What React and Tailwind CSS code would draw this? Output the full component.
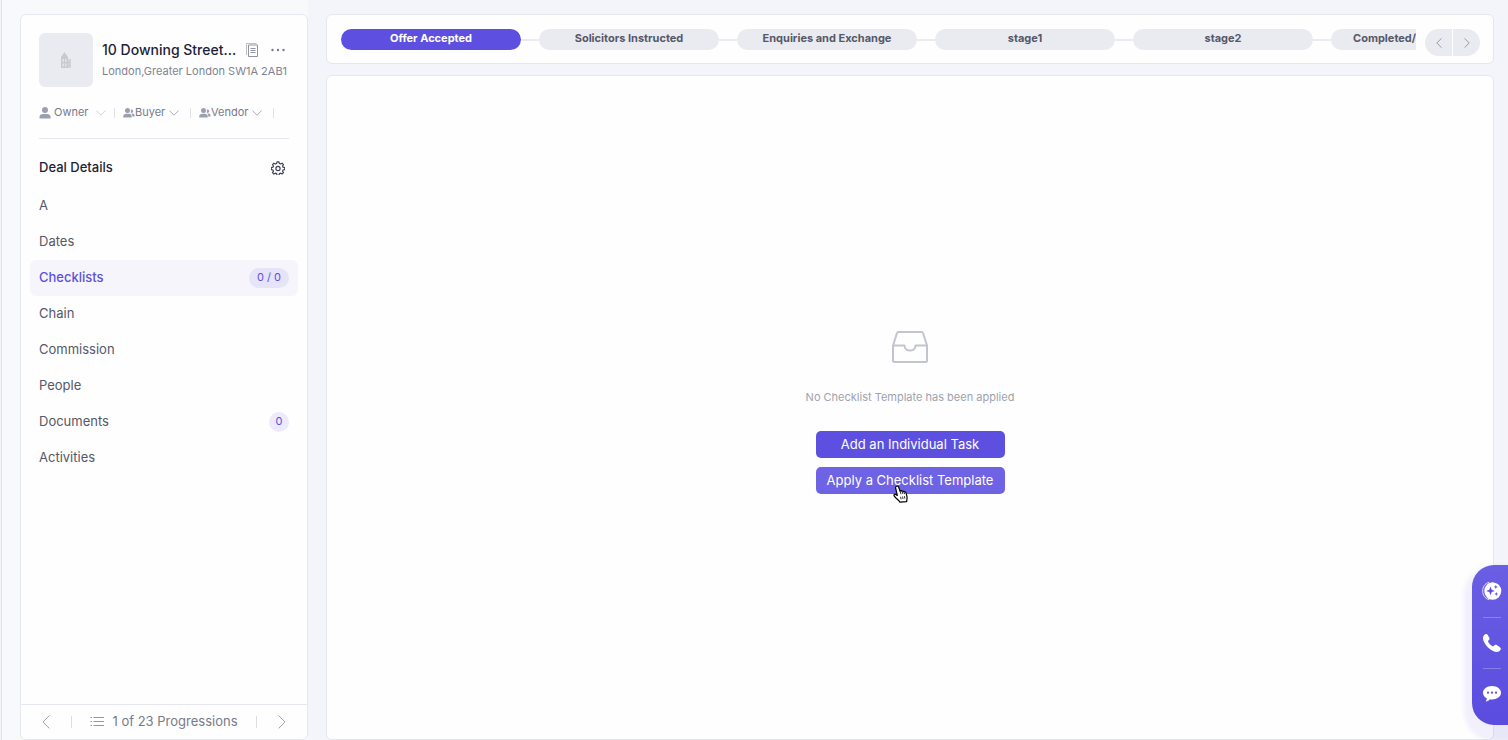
import { Fragment } from "react";

const stages = [
  "Offer Accepted",
  "Solicitors Instructed",
  "Enquiries and Exchange",
  "stage1",
  "stage2",
];

const menu = [
  { label: "A" },
  { label: "Dates" },
  { label: "Checklists", badge: "0 / 0", active: true },
  { label: "Chain" },
  { label: "Commission" },
  { label: "People" },
  { label: "Documents", badge: "0" },
  { label: "Activities" },
];

function Chevron({ d, className }) {
  return (
    <svg viewBox="0 0 16 16" fill="none" stroke="currentColor" strokeLinecap="round" strokeLinejoin="round" className={className}>
      <path d={d} />
    </svg>
  );
}

const LEFT = "M11.5 1 4.5 8l7 7";
const RIGHT = "M4.5 1l7 7-7 7";
const DOWN = "M1 4.500 8 11.500 15 4.500";

function HouseIcon() {
  return (
    <svg viewBox="0 0 12 18" className="h-[18px] w-3">
      <path d="M1 17V6l3.500-5L8 6v11z" fill="#c9cad0" />
      <path d="M8 8.500l3-1V17H8z" fill="#d3d4d9" />
      <path d="M2.500 8h1.500v3H2.500zM5 8h1.500v3H5zM2.500 12.500h1.500v3H2.500zM5 12.500h1.500v3H5z" fill="#e3e4ea" />
      <path d="M9 11h1v1H9zM9 14h1v1H9z" fill="#bdbec5" />
    </svg>
  );
}

function CopyIcon() {
  return (
    <svg viewBox="0 0 13 14" fill="none" stroke="currentColor" className="h-3.5 w-[13px]">
      <path d="M2.500 2v11.500h9V2z" />
      <path d="M.5 12V.5h10" opacity=".6" />
      <path d="M4.500 5.500h5M4.500 7.500h5M4.500 9.500h5" />
    </svg>
  );
}

function PersonIcon() {
  return (
    <svg viewBox="0 0 12 12" fill="currentColor" className="size-3 text-[#9c9fb0]">
      <circle cx="6" cy="3" r="3" />
      <path d="M.5 11.500V10c0-2 1.500-3 3.500-3h4c2 0 3.500 1 3.500 3v1.500z" />
    </svg>
  );
}

function PeopleIcon() {
  return (
    <svg viewBox="0 0 12 12" fill="currentColor" className="size-3 text-[#9c9fb0]">
      <circle cx="4.500" cy="3.500" r="2.500" />
      <path d="M.3 10.500V9.300c0-1.600 1.200-2.600 2.800-2.600h2.800c1.600 0 2.800 1 2.800 2.600v1.200z" />
      <path d="M7.600 5.600a3.400 3.400 0 0 0 .2-3 1.700 1.700 0 1 1-.2 3zM9.400 9.600c0-1.500-.5-2.600-1.400-3.200h1.200c1.300 0 2.400.8 2.400 2.100v1.100z" />
    </svg>
  );
}

function GearIcon() {
  return (
    <svg viewBox="0 0 24 24" fill="none" stroke="currentColor" strokeWidth="2" strokeLinecap="round" strokeLinejoin="round" className="size-3.5">
      <path d="M10.300 1.500h3.400l.7 2.900 2 .9 2.600-1.600 2.400 2.400-1.600 2.600.8 1.900 2.900.7v3.400l-2.900.7-.8 2 1.600 2.500-2.400 2.400-2.600-1.500-2 .8-.7 2.900h-3.400l-.7-2.900-2-.8L5 22.400 2.600 20l1.600-2.600-.8-2-2.900-.7v-3.400l2.900-.7.8-1.900-1.600-2.600L5 3.700l2.600 1.600 2-.9z" />
      <circle cx="12" cy="12.800" r="3.600" />
    </svg>
  );
}

function ListIcon() {
  return (
    <svg viewBox="0 0 14 12" fill="none" stroke="currentColor" className="h-3 w-3.5 text-[#9496a4]">
      <path d="M3.500 1.500H14M3.500 5.500H14M3.500 9.500H14M.5 1.500h1.500M.5 5.500h1.500M.5 9.500h1.500" />
    </svg>
  );
}

function InboxIcon() {
  return (
    <svg viewBox="0 0 36 32" fill="none" stroke="#c3c5ce" strokeWidth="2" strokeLinejoin="round" className="h-8 w-9">
      <path d="M1 14.500 5 2c.2-.7.500-1 1.200-1h23.600c.7 0 1 .3 1.200 1l4 12.500V30a1 1 0 0 1-1 1H2a1 1 0 0 1-1-1z" />
      <path d="M1 14.500h11.500c0 3 2.500 5 5.500 5s5.500-2 5.500-5H35" />
    </svg>
  );
}

function HandCursor() {
  return (
    <svg viewBox="0 0 16 18" className="pointer-events-none absolute top-[18px] left-[77px] h-[18px] w-4">
      <path
        d="M3.600 1.200c1-.4 1.800.2 2.100 1L7 6c.6-.6 1.600-.5 2 .3.700-.5 1.600-.2 1.900.5.700-.4 1.700 0 2 .8.900 2.500 1.600 4.300 1 6.800l-.3 2.200-6.700.6c-.7-1.500-2-2.300-3.200-3.400L1.200 11c-.8-1 .4-2.200 1.500-1.600l1.600 1L2.600 3c-.2-.8.200-1.500 1-1.800z"
        fill="#fff"
        stroke="#000"
        strokeWidth="1.200"
        strokeLinejoin="round"
      />
      <path d="M7 6l1 3.200M9 6.400l.9 2.600M10.900 7l.8 2.200M7.500 11.800l.6 2.500M9.500 11.500l.5 2.500M11.400 11.200l.4 2.400" fill="none" stroke="#000" strokeWidth=".8" />
    </svg>
  );
}

function SparkIcon() {
  return (
    <svg viewBox="0 0 20 20" className="size-5">
      <circle cx="10.500" cy="10" r="8.800" fill="#fff" />
      <path d="M7 1.200a9.300 9.300 0 0 0 0 17.600" fill="none" stroke="#fff" strokeWidth=".8" />
      <path d="M5.500 2.800a9 9 0 0 0 0 14.400" fill="none" stroke="#5d50e0" strokeWidth=".8" />
      <path d="M8.500 5.500l1.200 3.200 3.200 1.200-3.200 1.200-1.200 3.200-1.200-3.200-3.200-1.200 3.200-1.200zM13.800 3.900l.6 1.400 1.400.6-1.400.6-.6 1.400-.6-1.400-1.400-.6 1.400-.6zM14.300 10.900l.6 1.500 1.500.6-1.500.6-.6 1.500-.6-1.500-1.500-.6 1.500-.6z" fill="#5d50e0" />
    </svg>
  );
}

function PhoneIcon() {
  return (
    <svg viewBox="0 0 18 18" fill="#fff" className="size-[18px]">
      <path d="M1.200.9C2.500-.3 4-.2 4.800 1.100l1.500 2.600c.6 1.100.2 2-.9 2.900-.5.400-.4 1 0 1.700.8 1.500 2.100 2.800 3.700 3.700.8.400 1.300.4 1.700-.1.900-1.200 1.800-1.500 2.900-.8l2.900 1.800c1.400.9 1.700 2.200.6 3.400-1.600 1.900-3.800 2.200-6.600 1C6.200 15.300 2.700 11.700.7 7.300-.4 4.800-.3 2.600 1.200.9z" />
    </svg>
  );
}

function ChatIcon() {
  return (
    <svg viewBox="0 0 18 17" className="h-[17px] w-[18px]">
      <path d="M9 1c5 0 9 2.900 9 6.700 0 3.900-4 6.700-9 6.700-.7 0-1.400 0-2-.2-1 1.100-2.300 2-4.400 2.200.8-1 1.200-2 1.100-3.200C1.400 12 0 10 0 7.700 0 3.900 4 1 9 1z" fill="#fff" />
      <circle cx="5" cy="7.700" r="1.100" fill="#5d50e0" />
      <circle cx="9" cy="7.700" r="1.100" fill="#5d50e0" />
      <circle cx="13" cy="7.700" r="1.100" fill="#5d50e0" />
    </svg>
  );
}

function Sidebar() {
  return (
    <aside className="flex w-72 shrink-0 flex-col rounded-md border border-[#e6e7f0] bg-[#fefefe]">
      <div className="px-[18px] pt-[18px]">
        <div className="flex gap-[9px]">
          <div className="flex size-[54px] shrink-0 items-center justify-center rounded-md bg-[#eaebf0]">
            <HouseIcon />
          </div>
          <div className="min-w-0 flex-1 pt-1.5">
            <div className="flex h-[22px] items-center">
              <h1 className="flex-1 text-sm font-medium whitespace-nowrap text-[#1c1f37]">10 Downing Street...</h1>
              <button aria-label="Copy address" className="mr-3 text-[#8f92a1]">
                <CopyIcon />
              </button>
              <button aria-label="More" className="mr-1 text-[#777a8c]">
                <svg viewBox="0 0 14 4" fill="currentColor" className="h-1 w-3.5">
                  <circle cx="1.500" cy="2" r="1.200" />
                  <circle cx="7" cy="2" r="1.200" />
                  <circle cx="12.500" cy="2" r="1.200" />
                </svg>
              </button>
            </div>
            <p className="text-[11px] leading-5 whitespace-nowrap text-[#808393]">London,Greater London SW1A 2AB1</p>
          </div>
        </div>

        <div className="flex h-[52px] items-center border-b border-[#e6e7ee] text-[11px] text-[#777a8b]">
          <button className="flex h-4 w-[75px] items-center">
            <PersonIcon />
            <span className="mr-2 ml-[3px]">Owner</span>
            <Chevron d={DOWN} className="size-2.5 text-[#b4b6c2]" />
          </button>
          <span className="mr-2 h-2.5 w-px bg-[#e0e1ea]" />
          <button className="flex h-4 w-[67px] items-center">
            <PeopleIcon />
            <span className="mr-1">Buyer</span>
            <Chevron d={DOWN} className="size-2.5" />
          </button>
          <span className="mr-2 h-2.5 w-px bg-[#e0e1ea]" />
          <button className="flex h-4 w-[74px] items-center">
            <PeopleIcon />
            <span className="mr-1">Vendor</span>
            <Chevron d={DOWN} className="size-2.5" />
          </button>
          <span className="h-2.5 w-px bg-[#e0e1ea]" />
        </div>

        <div className="flex h-[49px] items-center justify-between pt-2 pr-1">
          <h2 className="text-[13px] font-medium text-[#1c1f37]">Deal Details</h2>
          <button aria-label="Settings" className="text-[#3c3f55]">
            <GearIcon />
          </button>
        </div>
      </div>

      <nav className="flex-1 px-[9px]">
        {menu.map((item) => (
          <a
            key={item.label}
            href="#"
            className={
              item.active
                ? "flex h-9 items-center justify-between rounded-md bg-[#f5f5fb] px-[9px] text-[13px] font-medium text-[#5d50e0]"
                : "flex h-9 items-center justify-between px-[9px] text-[13px] text-[#555869]"
            }
          >
            {item.label}
            {item.badge && (
              <span
                className={
                  item.active
                    ? "h-5 rounded-full bg-[#e6e4f9] px-2 text-[11px] leading-[18px] font-normal text-[#5d50e0]"
                    : "h-5 w-5 rounded-full bg-[#eceafc] text-center text-[11px] leading-[18px] text-[#5d50e0]"
                }
              >
                {item.badge}
              </span>
            )}
          </a>
        ))}
      </nav>

      <div className="flex h-[35px] items-center justify-between border-t border-[#e6e7f0] px-[18px] text-[13px] text-[#777a8b]">
        <button aria-label="Previous" className="text-[#8f919f]">
          <Chevron d={LEFT} className="size-3.5" />
        </button>
        <span className="h-3 w-px bg-[#dcdde5]" />
        <button className="flex items-center gap-2">
          <ListIcon />
          1 of 23 Progressions
        </button>
        <span className="h-3 w-px bg-[#dcdde5]" />
        <button aria-label="Next" className="text-[#8f919f]">
          <Chevron d={RIGHT} className="size-3.5" />
        </button>
      </div>
    </aside>
  );
}

function StageBar() {
  return (
    <div className="flex h-[50px] shrink-0 items-start gap-[9px] rounded-md border border-[#e6e7ee] bg-[#fefefe] py-3.5 pr-[13px] pl-3.5">
      <div className="flex min-w-0 flex-1 items-center overflow-hidden">
        {stages.map((stage, i) => (
          <Fragment key={stage}>
            <button
              className={
                i === 0
                  ? "h-[21px] w-[180px] shrink-0 rounded-full bg-[#5d50e0] pb-1 text-[11px] leading-4 font-bold text-white"
                  : "h-[21px] w-[180px] shrink-0 rounded-full bg-[#eaebf0] pb-1 text-[11px] leading-4 font-bold text-[#555869]"
              }
            >
              {stage}
            </button>
            <span className="h-0.5 w-[18px] shrink-0 bg-[#eaebf0]" />
          </Fragment>
        ))}
        {/* last pill runs on to the right under the scroll buttons */}
        <button className="h-[21px] min-w-0 flex-1 rounded-l-full bg-[#eaebf0] pb-1 pl-[22px] text-left text-[11px] leading-4 font-bold text-[#555869]">
          Completed/
        </button>
      </div>
      <div className="flex gap-px text-[#666873]">
        <button aria-label="Previous stage" className="flex h-[27px] w-[27px] items-center justify-center rounded-l-full bg-[#eaebf0]">
          <Chevron d={LEFT} className="size-2.5" />
        </button>
        <button aria-label="Next stage" className="flex h-[27px] w-[27px] items-center justify-center rounded-r-full bg-[#eaebf0]">
          <Chevron d={RIGHT} className="size-2.5" />
        </button>
      </div>
    </div>
  );
}

function EmptyChecklist() {
  return (
    <section className="flex flex-1 flex-col items-center justify-center rounded-md border border-[#e6e7ee] bg-[#fefefe] pt-2.5">
      <InboxIcon />
      <p className="mt-6 mb-6 text-[11px] leading-5 text-[#a0a2af]">No Checklist Template has been applied</p>
      <div className="flex w-[189px] flex-col gap-[9px]">
        <button className="h-[27px] rounded-[5px] bg-[#5d50e0] text-[13px] text-white">Add an Individual Task</button>
        <button className="relative h-[27px] rounded-[5px] bg-[#6e63e5] text-[13px] text-white">
          Apply a Checklist Template
          <HandCursor />
        </button>
      </div>
    </section>
  );
}

function QuickActions() {
  return (
    <div className="fixed right-0 bottom-[15px] flex h-40 w-9 flex-col items-center gap-4 rounded-l-[22px] bg-linear-to-b from-[#6a5ee3] to-[#5a4cdf] pt-4 pl-1 shadow-[0_8px_4px_8px_rgba(93,80,224,0.08)]">
      <button aria-label="Assistant">
        <SparkIcon />
      </button>
      <span className="h-px w-[18px] shrink-0 bg-white/25" />
      <button aria-label="Call">
        <PhoneIcon />
      </button>
      <span className="h-px w-[18px] shrink-0 bg-white/25" />
      <button aria-label="Messages">
        <ChatIcon />
      </button>
    </div>
  );
}

export default function App() {
  return (
    <div className="flex min-h-screen bg-[#f4f5fa] font-[Inter,sans-serif]">
      <div className="flex border-l border-[#f4f5fa] bg-[#f8f9fb]">
        <div className="flex border-l border-[#e2e3ea] pt-3.5 pl-[18px]">
          <Sidebar />
        </div>
      </div>
      <main className="flex min-w-0 flex-1 flex-col gap-[11px] pt-3.5 pr-3.5 pl-[18px]">
        <StageBar />
        <EmptyChecklist />
      </main>
      <QuickActions />
    </div>
  );
}
